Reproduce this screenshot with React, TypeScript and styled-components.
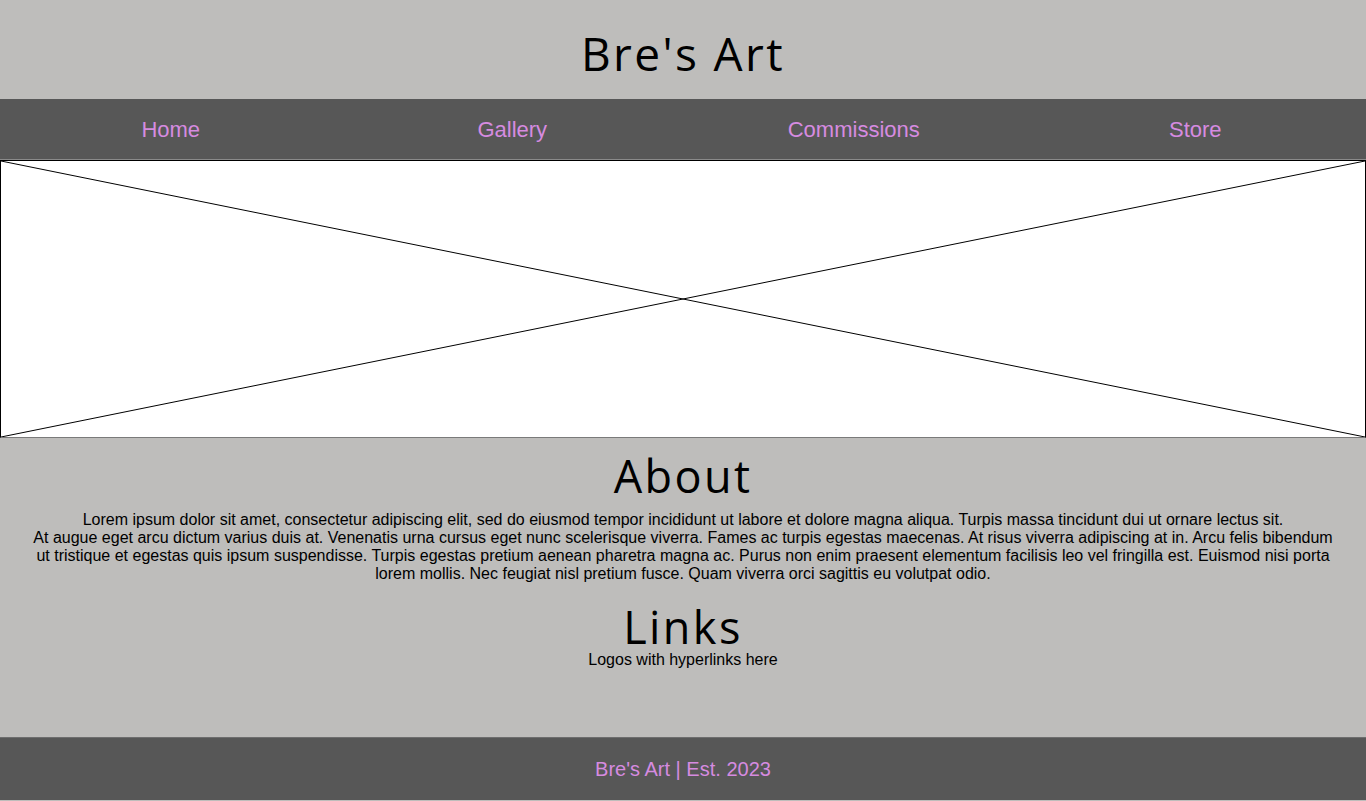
import React from "react";
import styled, { createGlobalStyle } from "styled-components";

const Global = createGlobalStyle`
  html, body { margin: 0; padding: 0; background: #bebdbb; }
  body { font-family: "Liberation Sans", Arial, sans-serif; }
`;

const Header = styled.header`
  height: 99px;
  background: #bebdbb;
  display: flex;
  align-items: center;
  justify-content: center;
`;

const Title = styled.h1`
  margin: 6px 0 0;
  font-family: "Open Sans", sans-serif;
  font-weight: 400;
  font-size: 46px;
  letter-spacing: 2.4px;
  color: #000;
`;

const Nav = styled.nav`
  height: 60px;
  background: #575757;
  border-bottom: 1px solid #8a8a8a;
  display: grid;
  grid-template-columns: repeat(4, 1fr);
  align-items: center;
`;

const NavLink = styled.a`
  text-align: center;
  color: #d68be0;
  font-size: 22px;
  text-decoration: none;
  margin-top: 1px;
`;

const Hero = styled.div`
  height: 276px;
  background: #fff;
  border: 1px solid #000;
  border-bottom: 1px solid #7a7a7a;
  svg { display: block; width: 100%; height: 100%; }
`;

const Main = styled.main`
  height: 299px;
  background: #bebdbb;
  display: flex;
  flex-direction: column;
  align-items: center;
  text-align: center;
`;

const SectionTitle = styled.h2`
  margin: 10px 0 0;
  font-family: "Open Sans", sans-serif;
  font-weight: 400;
  font-size: 45px;
  line-height: 56px;
  letter-spacing: 2.4px;
  color: #000;
`;

const Para = styled.p`
  margin: 7px 0 0;
  padding: 0 30px;
  font-size: 16px;
  line-height: 18px;
  color: #000;
`;

const LinksTitle = styled(SectionTitle)`
  margin-top: 21px;
  line-height: 46px;
`;

const Small = styled.p`
  margin: 1px 0 0;
  font-size: 16px;
  line-height: 18px;
`;

const Footer = styled.footer`
  height: 62px;
  background: #575757;
  border-top: 1px solid #6e6e6e;
  display: flex;
  align-items: center;
  justify-content: center;
  color: #d68be0;
  font-size: 20px;
`;

export default function App() {
  return (
    <>
      <Global />
      <Header>
        <Title>Bre's Art</Title>
      </Header>
      <Nav>
        <NavLink href="#">Home</NavLink>
        <NavLink href="#">Gallery</NavLink>
        <NavLink href="#">Commissions</NavLink>
        <NavLink href="#">Store</NavLink>
      </Nav>
      <Hero>
        <svg viewBox="0 0 1364 276" preserveAspectRatio="none">
          <line x1="0" y1="0" x2="1364" y2="276" stroke="#000" strokeWidth="1" />
          <line x1="1364" y1="0" x2="0" y2="276" stroke="#000" strokeWidth="1" />
        </svg>
      </Hero>
      <Main>
        <SectionTitle>About</SectionTitle>
        <Para>
          Lorem ipsum dolor sit amet, consectetur adipiscing elit, sed do eiusmod tempor incididunt ut labore et dolore magna aliqua. Turpis massa tincidunt dui ut ornare lectus sit.
          <br />
          At augue eget arcu dictum varius duis at. Venenatis urna cursus eget nunc scelerisque viverra. Fames ac turpis egestas maecenas. At risus viverra adipiscing at in. Arcu felis bibendum ut tristique et egestas quis ipsum suspendisse. Turpis egestas pretium aenean pharetra magna ac. Purus non enim praesent elementum facilisis leo vel fringilla est. Euismod nisi porta lorem mollis. Nec feugiat nisl pretium fusce. Quam viverra orci sagittis eu volutpat odio.
        </Para>
        <LinksTitle>Links</LinksTitle>
        <Small>Logos with hyperlinks here</Small>
      </Main>
      <Footer>Bre's Art | Est. 2023</Footer>
    </>
  );
}
